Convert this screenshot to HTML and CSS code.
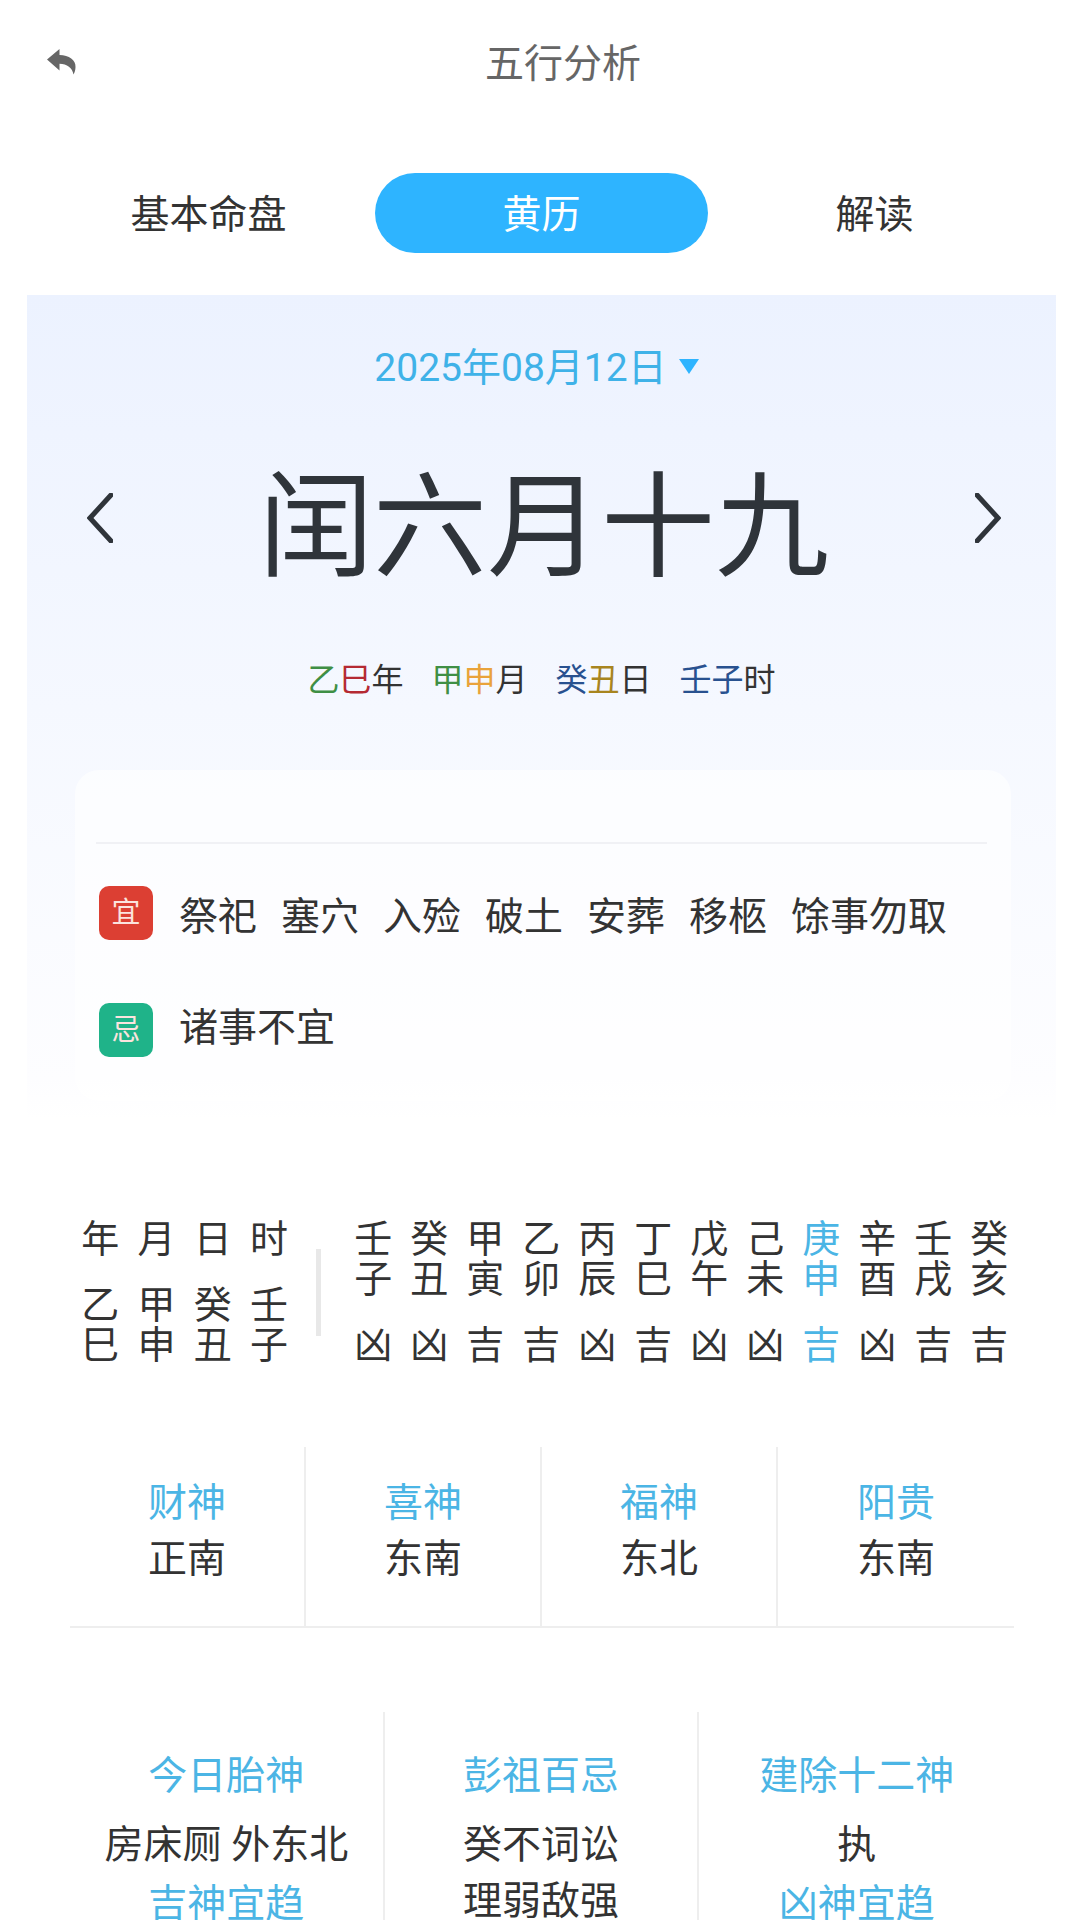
FILE: index.html
```html
<!DOCTYPE html>
<html lang="zh-CN">
<head>
    <meta charset="UTF-8">
    <meta name="viewport" content="width=device-width, initial-scale=1.0">
    <title>五行分析</title>
    <link rel="stylesheet" href="styles.css">
</head>
<body>
<header class="topbar">
    <svg class="back" viewBox="0 0 29 26" aria-hidden="true">
        <path d="M0 10.5 L12.5 0 V6 C22 6 29 11 28.5 18 C28.5 21 27.5 23.5 26.5 25.5 C25.5 19 20 14.8 12.5 14.8 V21.5 Z"/>
    </svg>
    <h1 class="title">五行分析</h1>
</header>

<nav class="tabs">
    <div class="tab">基本命盘</div>
    <div class="tab active">黄历</div>
    <div class="tab">解读</div>
</nav>

<section class="almanac">
    <div class="date">2025年08月12日<span class="caret"></span></div>

    <div class="lunar">
        <svg class="chevron" viewBox="0 0 26 50" aria-hidden="true"><path d="M24 2 L3 25 L24 48"/></svg>
        <div class="lunar-day">闰六月十九</div>
        <svg class="chevron" viewBox="0 0 26 50" aria-hidden="true"><path d="M2 2 L23 25 L2 48"/></svg>
    </div>

    <div class="ganzhi">
        <span><i class="wood">乙</i><i class="fire">巳</i>年</span>
        <span><i class="wood">甲</i><i class="metal">申</i>月</span>
        <span><i class="water">癸</i><i class="earth">丑</i>日</span>
        <span><i class="water">壬</i><i class="water">子</i>时</span>
    </div>

    <div class="advice">
        <div class="advice-rule"></div>
        <div class="advice-row">
            <span class="badge good">宜</span>
            <span class="advice-items">
                <span>祭祀</span><span>塞穴</span><span>入殓</span><span>破土</span><span>安葬</span><span>移柩</span><span>馀事勿取</span>
            </span>
        </div>
        <div class="advice-row">
            <span class="badge bad">忌</span>
            <span class="advice-items"><span>诸事不宜</span></span>
        </div>
    </div>
</section>

<section class="hours">
    <div class="pillars">
        <div class="grid-row four"><span>年</span><span>月</span><span>日</span><span>时</span></div>
        <div class="grid-row four spaced"><span>乙</span><span>甲</span><span>癸</span><span>壬</span></div>
        <div class="grid-row four"><span>巳</span><span>申</span><span>丑</span><span>子</span></div>
    </div>
    <div class="hours-rule"></div>
    <div class="hour-table">
        <div class="grid-row twelve"><span>壬</span><span>癸</span><span>甲</span><span>乙</span><span>丙</span><span>丁</span><span>戊</span><span>己</span><span class="now">庚</span><span>辛</span><span>壬</span><span>癸</span></div>
        <div class="grid-row twelve"><span>子</span><span>丑</span><span>寅</span><span>卯</span><span>辰</span><span>巳</span><span>午</span><span>未</span><span class="now">申</span><span>酉</span><span>戌</span><span>亥</span></div>
        <div class="grid-row twelve spaced"><span>凶</span><span>凶</span><span>吉</span><span>吉</span><span>凶</span><span>吉</span><span>凶</span><span>凶</span><span class="now">吉</span><span>凶</span><span>吉</span><span>吉</span></div>
    </div>
</section>

<section class="gods">
    <div class="god"><div class="label">财神</div><div>正南</div></div>
    <div class="god"><div class="label">喜神</div><div>东南</div></div>
    <div class="god"><div class="label">福神</div><div>东北</div></div>
    <div class="god"><div class="label">阳贵</div><div>东南</div></div>
</section>

<section class="details">
    <div class="detail">
        <div class="label">今日胎神</div>
        <div class="value">房床厕 外东北</div>
        <div class="label">吉神宜趋</div>
    </div>
    <div class="detail">
        <div class="label">彭祖百忌</div>
        <div class="value">癸不词讼<br>理弱敌强</div>
    </div>
    <div class="detail">
        <div class="label">建除十二神</div>
        <div class="value">执</div>
        <div class="label">凶神宜趋</div>
    </div>
</section>
</body>
</html>
```

FILE: styles.css
```css
/* Page */
html, body {
    margin: 0;
    padding: 0;
}

body {
    width: 1080px;
    height: 1920px;
    overflow: hidden;
    background-color: #ffffff;
    color: #333333;
    font-family: Roboto, "Noto Sans CJK SC", sans-serif;
    font-size: 39px;
}

/* Top bar */
.topbar {
    display: flex;
    align-items: center;
    height: 126px;
    padding-left: 47px;
}

.back {
    width: 29px;
    height: 26px;
    margin-top: -2px;
    fill: #666666;
}

.title {
    margin: 0 0 7px 409px;
    font-size: 39px;
    font-weight: 400;
    color: #666666;
}

/* Tabs */
.tabs {
    display: grid;
    grid-template-columns: repeat(3, 333px);
    margin: 47px 0 42px 42px;
}

.tab {
    height: 80px;
    line-height: 84px;
    text-align: center;
}

.tab.active {
    background-color: #2eb4ff;
    border-radius: 40px;
    color: #ffffff;
}

/* Almanac panel */
.almanac {
    height: 825px;
    margin: 0 24px 0 27px;
    padding-top: 49px;
    box-sizing: border-box;
    background: linear-gradient(#ecf2ff, #f5f8ff 50%, #fdfdff 95%, #ffffff);
}

.date {
    display: flex;
    align-items: center;
    justify-content: center;
    height: 48px;
    padding-right: 10px;
    color: #3fb2e8;
    line-height: 48px;
}

.caret {
    width: 0;
    height: 0;
    margin: -4px 0 0 12px;
    border-left: 10px solid transparent;
    border-right: 10px solid transparent;
    border-top: 15px solid #2eb4ff;
}

.lunar {
    display: flex;
    align-items: center;
    justify-content: space-between;
    height: 140px;
    margin-top: 66px;
    padding: 0 55px 0 60px;
}

.chevron {
    width: 26px;
    height: 50px;
    margin-top: -20px;
    fill: none;
    stroke: #2f343a;
    stroke-width: 5;
    stroke-linecap: round;
}

.lunar-day {
    font-size: 114px;
    line-height: 140px;
    color: #2f343a;
}

.ganzhi {
    display: flex;
    justify-content: center;
    gap: 28px;
    margin-top: 62px;
    font-size: 32px;
    line-height: 40px;
}

.ganzhi i {
    font-style: normal;
}

.wood { color: #3f8f45; }
.fire { color: #b52a33; }
.metal { color: #e9a33b; }
.water { color: #28518f; }
.earth { color: #a8851f; }

/* Advice card */
.advice {
    height: 331px;
    margin: 70px 45px 0 48px;
    padding: 72px 24px 0 21px;
    box-sizing: border-box;
    background-color: rgba(255, 255, 255, 0.6);
    border-radius: 24px;
}

.advice-rule {
    height: 2px;
    background-color: #f0f1f5;
}

.advice-row {
    display: flex;
    align-items: center;
    height: 54px;
    margin-top: 42px;
}

.advice-row + .advice-row {
    margin-top: 63px;
}

.advice-row + .advice-row .advice-items {
    margin-bottom: 12px;
}

.badge {
    display: block;
    flex: none;
    width: 54px;
    height: 54px;
    margin-left: 3px;
    border-radius: 10px;
    color: #fbe3de;
    font-size: 29px;
    line-height: 54px;
    text-align: center;
}

.badge.good { background-color: #dc3f33; }
.badge.bad { background-color: #1fb389; }

.advice-items {
    display: flex;
    gap: 24px;
    margin-left: 26px;
}

/* Hour table */
.hours {
    display: flex;
    align-items: center;
    margin-top: 99px;
    padding-left: 72px;
    font-size: 38px;
    line-height: 40px;
}

.grid-row {
    display: grid;
    text-align: center;
}

.grid-row.four { grid-template-columns: repeat(4, 56.3px); }
.grid-row.twelve { grid-template-columns: repeat(12, 56px); }
.grid-row.spaced { margin-top: 26px; }

.hours-rule {
    width: 5px;
    height: 87px;
    margin: 0 24px 0 19px;
    background-color: #e8e8e8;
}

.now {
    color: #4bb5e5;
}

/* Direction grid */
.gods {
    display: grid;
    grid-template-columns: repeat(4, 1fr);
    height: 181px;
    margin: 82px 66px 0 70px;
    box-sizing: border-box;
    border-bottom: 2px solid #eeeeee;
}

.god {
    padding-top: 28px;
    border-right: 2px solid #eeeeee;
    line-height: 56px;
    text-align: center;
}

.god:last-child {
    border-right: none;
}

.label {
    color: #4bb5e5;
}

/* Detail grid */
.details {
    display: grid;
    grid-template-columns: repeat(3, 1fr);
    height: 208px;
    margin: 84px 66px 0 70px;
    overflow: hidden;
}

.detail {
    padding-top: 36px;
    border-right: 2px solid #eeeeee;
    line-height: 56px;
    text-align: center;
}

.detail:last-child {
    border-right: none;
}

.detail .label:first-child {
    margin-bottom: 13px;
}

.value + .label {
    margin-top: 3px;
}
```
